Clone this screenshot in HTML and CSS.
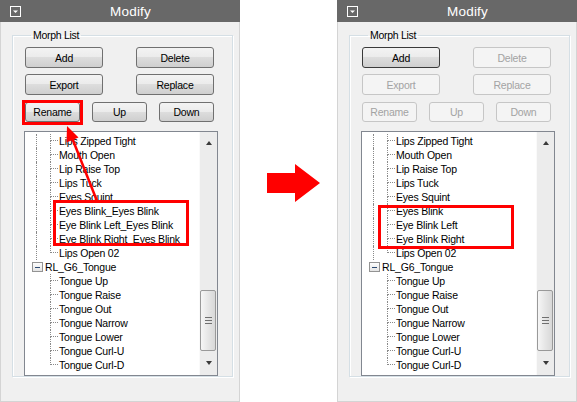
FILE: index.html
```html
<!DOCTYPE html>
<html lang="en">
<head>
  <meta charset="UTF-8">
  <title>Morph List - Rename</title>
  <link rel="stylesheet" href="styles.css">
</head>
<body>
  <div class="stage">
    <!-- before -->
    <section class="panel">
      <div class="titlebar">
        <span class="menu-icon"><svg width="11" height="11" viewBox="0 0 11 11"><rect x="0.5" y="0.5" width="10" height="10" fill="none" stroke="#fff"/><path d="M3 4.5h5L5.5 7z" fill="#fff"/></svg></span>
        <span class="title">Modify</span>
      </div>
      <div class="panel-body">
        <fieldset class="group">
          <legend>Morph List</legend>
          <div class="btn-row">
            <button class="btn btn-wide">Add</button>
            <button class="btn btn-wide">Delete</button>
          </div>
          <div class="btn-row row2">
            <button class="btn btn-wide">Export</button>
            <button class="btn btn-wide">Replace</button>
          </div>
          <div class="btn-row row3">
            <button class="btn btn-small">Rename</button>
            <button class="btn btn-small">Up</button>
            <button class="btn btn-small">Down</button>
          </div>
          <div class="tree">
            <div class="tree-list">
              <div class="row"><span class="g1 line"></span><span class="g2"></span><span class="label">Lips Zipped Tight</span></div>
              <div class="row"><span class="g1 line"></span><span class="g2"></span><span class="label">Mouth Open</span></div>
              <div class="row"><span class="g1 line"></span><span class="g2"></span><span class="label">Lip Raise Top</span></div>
              <div class="row"><span class="g1 line"></span><span class="g2"></span><span class="label">Lips Tuck</span></div>
              <div class="row"><span class="g1 line"></span><span class="g2"></span><span class="label">Eyes Squint</span></div>
              <div class="row"><span class="g1 line"></span><span class="g2"></span><span class="label">Eyes Blink_Eyes Blink</span></div>
              <div class="row"><span class="g1 line"></span><span class="g2"></span><span class="label">Eye Blink Left_Eyes Blink</span></div>
              <div class="row"><span class="g1 line"></span><span class="g2"></span><span class="label">Eye Blink Right_Eyes Blink</span></div>
              <div class="row"><span class="g1 line"></span><span class="g2 last"></span><span class="label">Lips Open 02</span></div>
              <div class="row parent"><span class="expander"><i></i></span><span class="label">RL_G6_Tongue</span></div>
              <div class="row"><span class="g1"></span><span class="g2"></span><span class="label">Tongue Up</span></div>
              <div class="row"><span class="g1"></span><span class="g2"></span><span class="label">Tongue Raise</span></div>
              <div class="row"><span class="g1"></span><span class="g2"></span><span class="label">Tongue Out</span></div>
              <div class="row"><span class="g1"></span><span class="g2"></span><span class="label">Tongue Narrow</span></div>
              <div class="row"><span class="g1"></span><span class="g2"></span><span class="label">Tongue Lower</span></div>
              <div class="row"><span class="g1"></span><span class="g2"></span><span class="label">Tongue Curl-U</span></div>
              <div class="row"><span class="g1"></span><span class="g2 last"></span><span class="label">Tongue Curl-D</span></div>
            </div>
            <div class="scrollbar">
              <div class="sb-btn sb-up"><span class="tri-up"></span></div>
              <div class="sb-track"><div class="thumb"><span class="grip"></span></div></div>
              <div class="sb-btn sb-down"><span class="tri-down"></span></div>
            </div>
          </div>
        </fieldset>
      </div>
      <div class="mark mark-rename"></div>
      <div class="mark mark-before"></div>
      <svg class="annot" width="240" height="402" viewBox="0 0 240 402">
        <line x1="97" y1="201" x2="72.5" y2="139" stroke="#f00" stroke-width="2.5"/>
        <polygon points="67,126 78.5,137.5 66.5,142.5" fill="#f00"/>
      </svg>
    </section>

    <div class="between">
      <svg width="54" height="40" viewBox="0 0 54 40"><path d="M0 9h28V0l25 19-25 19v-9H0z" fill="#f00"/></svg>
    </div>

    <!-- after -->
    <section class="panel">
      <div class="titlebar">
        <span class="menu-icon"><svg width="11" height="11" viewBox="0 0 11 11"><rect x="0.5" y="0.5" width="10" height="10" fill="none" stroke="#fff"/><path d="M3 4.5h5L5.5 7z" fill="#fff"/></svg></span>
        <span class="title">Modify</span>
      </div>
      <div class="panel-body">
        <fieldset class="group">
          <legend>Morph List</legend>
          <div class="btn-row">
            <button class="btn btn-wide default">Add</button>
            <button class="btn btn-wide" disabled>Delete</button>
          </div>
          <div class="btn-row row2">
            <button class="btn btn-wide" disabled>Export</button>
            <button class="btn btn-wide" disabled>Replace</button>
          </div>
          <div class="btn-row row3">
            <button class="btn btn-small" disabled>Rename</button>
            <button class="btn btn-small" disabled>Up</button>
            <button class="btn btn-small" disabled>Down</button>
          </div>
          <div class="tree">
            <div class="tree-list">
              <div class="row"><span class="g1 line"></span><span class="g2"></span><span class="label">Lips Zipped Tight</span></div>
              <div class="row"><span class="g1 line"></span><span class="g2"></span><span class="label">Mouth Open</span></div>
              <div class="row"><span class="g1 line"></span><span class="g2"></span><span class="label">Lip Raise Top</span></div>
              <div class="row"><span class="g1 line"></span><span class="g2"></span><span class="label">Lips Tuck</span></div>
              <div class="row"><span class="g1 line"></span><span class="g2"></span><span class="label">Eyes Squint</span></div>
              <div class="row"><span class="g1 line"></span><span class="g2"></span><span class="label">Eyes Blink</span></div>
              <div class="row"><span class="g1 line"></span><span class="g2"></span><span class="label">Eye Blink Left</span></div>
              <div class="row"><span class="g1 line"></span><span class="g2"></span><span class="label">Eye Blink Right</span></div>
              <div class="row"><span class="g1 line"></span><span class="g2 last"></span><span class="label">Lips Open 02</span></div>
              <div class="row parent"><span class="expander"><i></i></span><span class="label">RL_G6_Tongue</span></div>
              <div class="row"><span class="g1"></span><span class="g2"></span><span class="label">Tongue Up</span></div>
              <div class="row"><span class="g1"></span><span class="g2"></span><span class="label">Tongue Raise</span></div>
              <div class="row"><span class="g1"></span><span class="g2"></span><span class="label">Tongue Out</span></div>
              <div class="row"><span class="g1"></span><span class="g2"></span><span class="label">Tongue Narrow</span></div>
              <div class="row"><span class="g1"></span><span class="g2"></span><span class="label">Tongue Lower</span></div>
              <div class="row"><span class="g1"></span><span class="g2"></span><span class="label">Tongue Curl-U</span></div>
              <div class="row"><span class="g1"></span><span class="g2 last"></span><span class="label">Tongue Curl-D</span></div>
            </div>
            <div class="scrollbar">
              <div class="sb-btn sb-up"><span class="tri-up"></span></div>
              <div class="sb-track"><div class="thumb"><span class="grip"></span></div></div>
              <div class="sb-btn sb-down"><span class="tri-down"></span></div>
            </div>
          </div>
        </fieldset>
      </div>
      <div class="mark mark-after"></div>
    </section>
  </div>
</body>
</html>
```

FILE: styles.css
```css
body { margin: 0; background: #fff; font-family: "Liberation Sans", Arial, sans-serif; }
.stage { display: flex; width: 577px; height: 402px; }

.panel { position: relative; width: 240px; height: 402px; flex: none; display: flex; flex-direction: column; background: #f0f0f0; }
.titlebar { height: 22px; flex: none; display: flex; align-items: center; padding-left: 10px; background: #686868; }
.menu-icon { display: flex; width: 11px; height: 11px; }
.title { flex: 1; text-align: center; color: #fff; font-size: 13.5px; letter-spacing: 0.2px; }
.panel-body { flex: 1; border: 1px solid #d4d4d4; border-top: none; }

.group { width: 221px; height: 348px; box-sizing: border-box; margin: 7px 0 0 11px; padding: 6px 0 0 12px; border: 1px solid #d5dfe5; box-shadow: inset 1px 1px 0 #fff, 1px 1px 0 #fff; min-width: 0; }
.group legend { padding: 0 2px; margin-left: 6px; font-size: 10.5px; line-height: 12px; letter-spacing: -0.3px; color: #000; }

.btn-row { display: flex; justify-content: space-between; width: 189px; }
.row2 { margin-top: 6px; }
.row3 { margin-top: 7px; }
.btn { height: 21px; padding: 0; font-family: "Liberation Sans", Arial, sans-serif; font-size: 10.5px; letter-spacing: -0.2px; color: #000; border: 1px solid #707070; border-radius: 3px; background: linear-gradient(#f3f3f3, #ebebeb 50%, #dddddd 50%, #cfcfcf); }
.btn-wide { width: 78px; }
.btn-small { width: 55px; height: 20px; }
.btn.default { border-color: #3a3a3a; }
.btn:disabled { color: #a3a3a3; border-color: #c6c6c6; background: #f4f4f4; }

.tree { display: flex; width: 194px; height: 245px; box-sizing: border-box; margin: 9px 0 0 -1px; border: 1px solid #828790; background: #fff; }
.tree-list { flex: 1; padding-top: 2px; overflow: hidden; }
.row { display: flex; height: 14px; line-height: 14px; padding-left: 11px; white-space: nowrap; font-size: 10.5px; letter-spacing: -0.2px; color: #000; }
.g1 { width: 14px; flex: none; box-sizing: border-box; }
.g1.line { border-left: 1px dotted #8a8a8a; }
.g2 { width: 8px; flex: none; display: flex; flex-direction: column; }
.g2::before { content: ""; height: 7px; box-sizing: border-box; border-left: 1px dotted #8a8a8a; border-bottom: 1px dotted #8a8a8a; }
.g2::after { content: ""; flex: 1; border-left: 1px dotted #8a8a8a; }
.g2.last::after { border-left: none; }
.label { margin-left: 1px; }
.row.parent { padding-left: 7px; }
.row.parent .label { margin-left: 2px; }
.expander { width: 11px; height: 10px; box-sizing: border-box; margin-top: 2px; display: flex; align-items: center; justify-content: center; border: 1px solid #939393; background: linear-gradient(#fdfdfd, #e4e4e4); }
.expander i { width: 5px; height: 1px; background: #2d4a72; }

.scrollbar { width: 17px; flex: none; display: flex; flex-direction: column; background: #ececec; border-left: 1px solid #fafafa; }
.sb-btn { height: 17px; flex: none; display: flex; justify-content: center; align-items: flex-start; }
.tri-up { margin-top: 9px; width: 0; height: 0; border-left: 3.5px solid transparent; border-right: 3.5px solid transparent; border-bottom: 4px solid #3a3a3a; }
.tri-down { margin-top: 3px; width: 0; height: 0; border-left: 3.5px solid transparent; border-right: 3.5px solid transparent; border-top: 4px solid #3a3a3a; }
.sb-track { flex: 1; }
.thumb { margin-top: 141px; width: 16px; height: 61px; box-sizing: border-box; display: flex; align-items: center; justify-content: center; border: 1px solid #999; border-radius: 2px; background: linear-gradient(90deg, #f6f6f6, #e6e6e6 50%, #d8d8d8); }
.grip { width: 7px; height: 7px; background: repeating-linear-gradient(#6f6f6f 0 1px, transparent 1px 3px); }

.between { width: 97px; flex: none; box-sizing: border-box; padding: 164px 0 0 27px; }

.mark { position: absolute; border: 3px solid #f00; box-sizing: border-box; pointer-events: none; }
.mark-rename { left: 22px; top: 100px; width: 61px; height: 25px; }
.mark-before { left: 53px; top: 200px; width: 136px; height: 46px; }
.mark-after { left: 41px; top: 205px; width: 136px; height: 44px; }
.annot { position: absolute; left: 0; top: 0; pointer-events: none; }
```
